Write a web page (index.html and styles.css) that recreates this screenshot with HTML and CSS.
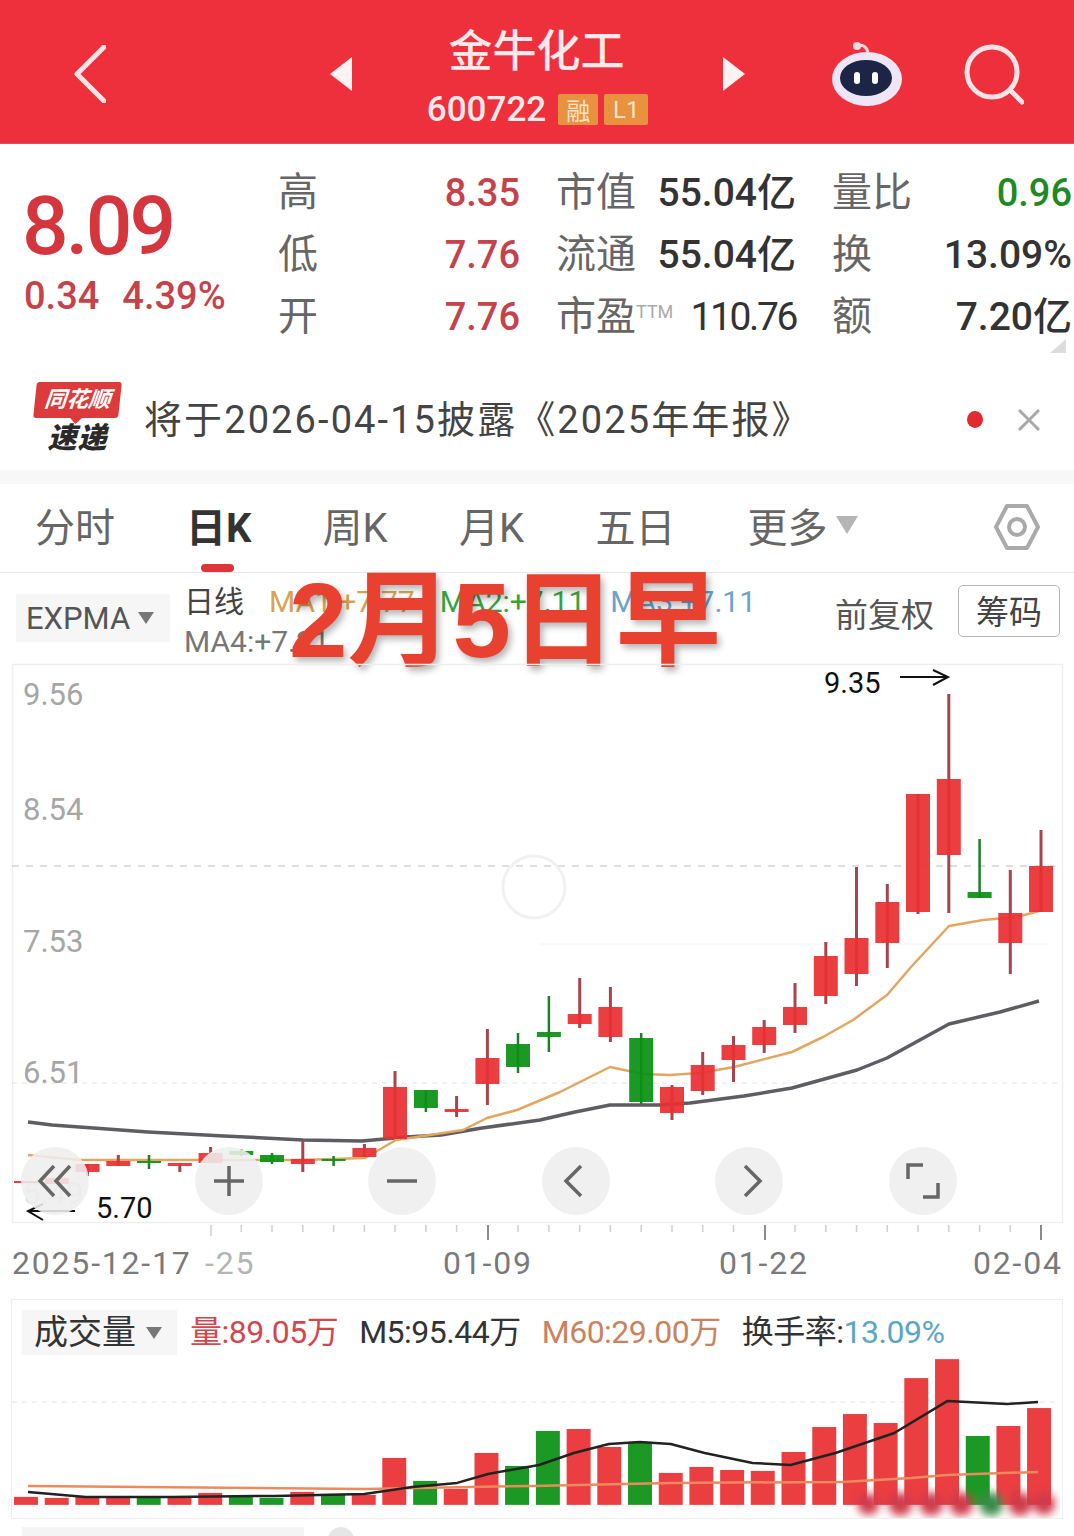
FILE: index.html
```html
<!DOCTYPE html>
<html lang="zh-CN">
<head>
<meta charset="utf-8">
<title>金牛化工 600722</title>
<link rel="stylesheet" href="styles.css">
</head>
<body>
<main class="page">
  <header class="topbar">
    <svg class="back" viewBox="0 0 32 58"><path d="M30 2 3 29l27 27"/></svg>
    <svg class="tri prev" viewBox="0 0 22 34"><path d="M22 0v34L0 17z"/></svg>
    <div class="title">
      <h1>金牛化工</h1>
      <div class="code"><span>600722</span><b class="badge rong">融</b><b class="badge">L1</b></div>
    </div>
    <svg class="tri next" viewBox="0 0 22 34"><path d="M0 0v34l22-17z"/></svg>
    <svg class="robot" viewBox="0 0 70 66">
      <path class="antenna" d="M25 6c5-2 9 0 11 6"/>
      <circle class="antenna-dot" cx="25" cy="6" r="4"/>
      <ellipse class="head" cx="35" cy="39" rx="35" ry="27"/>
      <ellipse class="face" cx="34" cy="38" rx="26" ry="18"/>
      <rect class="eye" x="22" y="32" width="6" height="12" rx="3"/>
      <rect class="eye" x="40" y="32" width="6" height="12" rx="3"/>
    </svg>
    <svg class="search" viewBox="0 0 60 62"><circle cx="28" cy="29" r="25"/><path d="m46 47 12 12"/></svg>
  </header>

  <section class="quote">
    <div class="price-block">
      <div class="price">8.09</div>
      <div class="change"><span>0.34</span><span>4.39%</span></div>
    </div>
    <div class="stats">
      <div class="stat-col first">
        <span class="lbl">高</span><span class="val red">8.35</span>
        <span class="lbl">低</span><span class="val red">7.76</span>
        <span class="lbl">开</span><span class="val red">7.76</span>
      </div>
      <div class="stat-col">
        <span class="lbl">市值</span><span class="val">55.04亿</span>
        <span class="lbl">流通</span><span class="val">55.04亿</span>
        <span class="lbl">市盈<sup>TTM</sup></span><span class="val tight">110.76</span>
      </div>
      <div class="stat-col">
        <span class="lbl">量比</span><span class="val green">0.96</span>
        <span class="lbl">换</span><span class="val">13.09%</span>
        <span class="lbl">额</span><span class="val">7.20亿</span>
      </div>
    </div>
    <i class="corner"></i>
  </section>

  <section class="news">
    <div class="logo">
      <div class="logo-top"><span>同花顺</span></div>
      <div class="logo-bottom">速递</div>
    </div>
    <p class="news-text">将于2026-04-15披露《2025年年报》</p>
    <i class="dot"></i>
    <svg class="close" viewBox="0 0 24 24"><path d="M2 2l20 20M22 2 2 22"/></svg>
  </section>

  <div class="divider"></div>

  <nav class="tabs">
    <span>分时</span>
    <span class="active">日K</span>
    <span>周K</span>
    <span>月K</span>
    <span>五日</span>
    <span class="more">更多<i class="caret caret-lg"></i></span>
    <svg class="hex" viewBox="0 0 46 46"><path d="M13 2h20l11 21-11 21H13L2 23z"/><circle cx="23" cy="23" r="8"/></svg>
  </nav>

  <section class="indicators">
    <div class="expma">EXPMA<i class="caret"></i></div>
    <div class="ma">
      <div class="ma-line"><span class="ma-name">日线</span><span class="c-orange">MA1:+7.77</span><span class="c-green">MA2:+7.11</span><span class="c-blue">MA3:+7.11</span></div>
      <div class="ma-line"><span class="c-gray">MA4:+7.21</span></div>
    </div>
    <div class="fq">前复权</div>
    <div class="chip">筹码</div>
  </section>

  <div class="stamp">2月5日早</div>

  <section class="chart">
    <svg class="chart-svg" viewBox="0 660 1074 639">
      <rect class="frame" x="12.5" y="664.5" width="1050" height="558"/>
      <path class="dash-strong" d="M12 866H1062"/>
      <path class="dash-faint" d="M12 1083H1062"/>
      <path class="dash-pale" d="M540 944H1050"/>
      <circle class="ghost" cx="534" cy="887" r="31"/>

      <text class="axis" x="23" y="705">9.56</text>
      <text class="axis" x="23" y="820">8.54</text>
      <text class="axis" x="23" y="952">7.53</text>
      <text class="axis" x="23" y="1083">6.51</text>
      <text class="axis faded" x="23" y="1204">5.49</text>

      <path class="line-grey" d="M28 1122 52 1125 148 1132 224 1136 303 1140 362 1141 406 1137 441 1135 482 1128 540 1120 575 1112 610 1105 660 1105 690 1103 744 1096 792 1088 857 1070 887 1058 949 1024 1000 1012 1039 1001"/>
      <path class="line-orange" d="M28 1155 80 1160 200 1160 300 1160 365 1158 396 1140 410 1138 463 1130 487 1118 517 1110 560 1092 610 1067 643 1074 670 1075 700 1073 734 1067 792 1052 823 1037 853 1020 887 995 911 967 949 926 983 920 1017 917 1039 911"/>

      <path class="wick wick-red" d="M87.5 1164V1176M118.3 1155V1166M179.8 1163V1172M210.6 1147V1163M302.8 1140V1172M364.4 1144V1157M395 1071V1139M456.6 1096V1117M487.4 1029V1105M579.7 978V1028M610.4 987V1042M672 1085V1120M702.7 1052V1095M733.5 1036V1082M764.2 1020V1053M795 983V1033M825.8 942V1004M856.5 867V986M887.3 884V968M918 794V914M948.8 694V913M1010.3 870V974M1041 830V912"/>
      <path class="wick wick-green" d="M149 1155V1169M241.3 1149V1156M272 1153V1164M333.6 1156V1166M425.9 1090V1112M518 1033V1073M548.9 996V1052M641.2 1033V1104M979.6 839V898"/>
      <g class="body-red">
        <rect x="14" y="1181" width="24" height="2"/>
        <rect x="44.8" y="1178" width="24" height="6"/>
        <rect x="75.5" y="1164" width="24" height="8"/>
        <rect x="106.3" y="1161" width="24" height="5"/>
        <rect x="167.8" y="1163" width="24" height="3"/>
        <rect x="198.6" y="1153" width="24" height="10"/>
        <rect x="290.8" y="1159" width="24" height="5"/>
        <rect x="352.4" y="1148" width="24" height="9"/>
        <rect x="383" y="1087" width="24" height="52"/>
        <rect x="444.6" y="1109" width="24" height="3"/>
        <rect x="475.4" y="1058" width="24" height="26"/>
        <rect x="567.7" y="1014" width="24" height="10"/>
        <rect x="598.4" y="1007" width="24" height="30"/>
        <rect x="660" y="1087" width="24" height="26"/>
        <rect x="690.7" y="1065" width="24" height="26"/>
        <rect x="721.5" y="1045" width="24" height="15"/>
        <rect x="752.2" y="1027" width="24" height="18"/>
        <rect x="783" y="1007" width="24" height="18"/>
        <rect x="813.8" y="956" width="24" height="40"/>
        <rect x="844.5" y="938" width="24" height="36"/>
        <rect x="875.3" y="902" width="24" height="41"/>
        <rect x="906" y="794" width="24" height="118"/>
        <rect x="936.8" y="779" width="24" height="76"/>
        <rect x="998.3" y="913" width="24" height="30"/>
        <rect x="1029" y="866" width="24" height="46"/>
      </g>
      <g class="body-green">
        <rect x="137" y="1161" width="24" height="2"/>
        <rect x="229.3" y="1151" width="24" height="4"/>
        <rect x="260" y="1155" width="24" height="7"/>
        <rect x="321.6" y="1159" width="24" height="2"/>
        <rect x="413.9" y="1090" width="24" height="18"/>
        <rect x="506" y="1044" width="24" height="23"/>
        <rect x="536.9" y="1032" width="24" height="5"/>
        <rect x="629.2" y="1038" width="24" height="64"/>
        <rect x="967.6" y="892" width="24" height="6"/>
      </g>

      <text class="note" x="824" y="693">9.35</text>
      <path class="arrow" d="M900 677H948M933 670 948 677 933 685"/>
      <text class="note" x="96" y="1218">5.70</text>
      <path class="arrow" d="M75 1211H28M43 1204 28 1211 43 1220"/>

      <path class="tick-minor" d="M241.3 1225V1232M272 1225V1232M302.8 1225V1232M333.6 1225V1232M364.4 1225V1232M395 1225V1232M425.9 1225V1232M456.6 1225V1232M518 1225V1232M548.9 1225V1232M579.7 1225V1232M610.4 1225V1232M641.2 1225V1232M672 1225V1232M702.7 1225V1232M733.5 1225V1232M795 1225V1232M825.8 1225V1232M856.5 1225V1232M887.3 1225V1232M918 1225V1232M948.8 1225V1232M979.6 1225V1232M1010.3 1225V1232M211 1225V1236"/>
      <path class="tick-major" d="M488 1225V1240M765 1225V1240M1041 1225V1240"/>

      <text class="date" x="12" y="1274">2025-12-17</text>
      <text class="date date-pale" x="205" y="1274">-25</text>
      <text class="date" x="443" y="1274">01-09</text>
      <text class="date" x="719" y="1274">01-22</text>
      <text class="date" x="973" y="1274">02-04</text>
    </svg>

    <div class="controls">
      <button class="ctl"><svg viewBox="0 0 36 36"><path d="M17 3 3 18l14 15M33 3 19 18l14 15"/></svg></button>
      <button class="ctl"><svg viewBox="0 0 36 36"><path d="M18 3V33M3 18H33"/></svg></button>
      <button class="ctl"><svg viewBox="0 0 36 36"><path d="M3 18H33"/></svg></button>
      <button class="ctl"><svg viewBox="0 0 36 36"><path d="M23 3 8 18l15 15"/></svg></button>
      <button class="ctl"><svg viewBox="0 0 36 36"><path d="M14 3l15 15-15 15"/></svg></button>
      <button class="ctl"><svg viewBox="0 0 36 36"><path d="M3 16V2H18M33 20V34H18"/></svg></button>
    </div>
  </section>

  <section class="volume">
    <div class="vol-head">
      <div class="vol-select">成交量<i class="caret"></i></div>
      <span class="v-red">量:89.05万</span>
      <span class="v-dark">M5:95.44万</span>
      <span class="v-orange">M60:29.00万</span>
      <span class="v-dark">换手率:<span class="v-blue">13.09%</span></span>
    </div>
    <svg class="vol-svg" viewBox="12 1356 1050 162">
      <defs><filter id="smear" x="-20%" y="-80%" width="140%" height="260%"><feGaussianBlur stdDeviation="4.5"/></filter></defs>
      <path class="dash-faint" d="M12 1402H1062"/>
      <g class="body-red">
        <rect x="14" y="1497" width="24" height="8"/>
        <rect x="44.8" y="1498" width="24" height="7"/>
        <rect x="75.5" y="1497" width="24" height="8"/>
        <rect x="106.3" y="1497" width="24" height="8"/>
        <rect x="167.8" y="1497" width="24" height="8"/>
        <rect x="198.6" y="1493" width="24" height="12"/>
        <rect x="290.8" y="1492" width="24" height="13"/>
        <rect x="352.4" y="1495" width="24" height="10"/>
        <rect x="383" y="1458" width="24" height="47"/>
        <rect x="444.6" y="1489" width="24" height="16"/>
        <rect x="475.4" y="1453" width="24" height="52"/>
        <rect x="567.7" y="1429" width="24" height="76"/>
        <rect x="598.4" y="1447" width="24" height="58"/>
        <rect x="660" y="1473" width="24" height="32"/>
        <rect x="690.7" y="1467" width="24" height="38"/>
        <rect x="721.5" y="1470" width="24" height="35"/>
        <rect x="752.2" y="1471" width="24" height="34"/>
        <rect x="783" y="1452" width="24" height="53"/>
        <rect x="813.8" y="1427" width="24" height="78"/>
        <rect x="844.5" y="1414" width="24" height="91"/>
        <rect x="875.3" y="1423" width="24" height="82"/>
        <rect x="906" y="1378" width="24" height="127"/>
        <rect x="936.8" y="1359" width="24" height="146"/>
        <rect x="998.3" y="1426" width="24" height="79"/>
        <rect x="1029" y="1408" width="24" height="97"/>
      </g>
      <g class="body-green">
        <rect x="137" y="1497" width="24" height="8"/>
        <rect x="229.3" y="1496" width="24" height="9"/>
        <rect x="260" y="1498" width="24" height="7"/>
        <rect x="321.6" y="1494" width="24" height="11"/>
        <rect x="413.9" y="1481" width="24" height="24"/>
        <rect x="506" y="1466" width="24" height="39"/>
        <rect x="536.9" y="1431" width="24" height="74"/>
        <rect x="629.2" y="1443" width="24" height="62"/>
        <rect x="967.6" y="1436" width="24" height="69"/>
      </g>
      <path class="vol-orange" d="M28 1486 365 1489 534 1486 672 1483 844 1482 913 1478 949 1475 1040 1472"/>
      <path class="vol-black" d="M28 1492 86 1497 172 1497 275 1496 365 1494 413 1487 458 1483 489 1474 540 1465 575 1453 610 1444 641 1442 672 1444 706 1453 754 1463 792 1465 837 1453 896 1433 949 1401 1009 1404 1040 1402"/>
      <g class="smear" filter="url(#smear)">
        <circle cx="870" cy="1504" r="11"/><circle cx="902" cy="1504" r="12"/><circle cx="933" cy="1504" r="12"/>
        <circle cx="963" cy="1504" r="12"/><circle class="smear-green" cx="993" cy="1504" r="12"/>
        <circle cx="1022" cy="1504" r="12"/><circle cx="1046" cy="1504" r="11"/>
      </g>
    </svg>
  </section>

  <footer class="cutoff"><i class="cut-box"></i><i class="cut-dot"></i></footer>
</main>
</body>
</html>
```

FILE: styles.css
```css
* { box-sizing: border-box; }
html, body { margin: 0; padding: 0; background: #fff; }
body { font-family: Roboto, "Noto Sans CJK SC", sans-serif; color: #333; }
i { display: block; font-style: normal; }
.page { position: relative; width: 1074px; height: 1536px; overflow: hidden; background: #fff; }

/* top bar */
.topbar { height: 144px; background: #ee303c; display: flex; align-items: center; padding: 4px 0 0 74px; border-bottom: 1px solid #d9525c; }
.back { width: 32px; height: 58px; fill: none; stroke: #fbe3e4; stroke-width: 5; stroke-linecap: round; stroke-linejoin: round; }
.tri { width: 22px; height: 34px; fill: #fff2f2; }
.prev { margin-left: 224px; }
.title { width: 371px; text-align: center; color: #fde9e9; margin-top: 11px; }
.title h1 { margin: 0; font-size: 44px; line-height: 50px; font-weight: 500; margin-left: -2px; }
.code { display: flex; justify-content: center; align-items: center; gap: 6px; height: 44px; margin-top: 11px; font-size: 35px; font-weight: 500; }
.badge { display: flex; align-items: center; justify-content: center; width: 44px; height: 31px; background: #e8923f; border-radius: 2px; font-size: 24px; font-weight: 400; color: #fbe4c8; }
.rong { width: 40px; margin-left: 6px; }
.next { margin-left: 0; }
.robot { width: 70px; height: 66px; margin-left: 87px; margin-top: -2px; }
.antenna { fill: none; stroke: #fbd9dc; stroke-width: 3; }
.antenna-dot { fill: #fbd9dc; }
.head { fill: #eee6f6; }
.face { fill: #1d2546; }
.eye { fill: #fff; }
.search { width: 60px; height: 62px; margin-left: 62px; fill: none; stroke: #fde3e4; stroke-width: 5; stroke-linecap: round; }

/* quote */
.quote { position: relative; display: flex; height: 225px; padding: 18px 0 0 22px; }
.price-block { width: 257px; color: #d23a42; }
.price { font-size: 82px; line-height: 96px; margin-top: 16px; letter-spacing: -2.8px; font-weight: 500; color: #d5353d; }
.change { display: flex; gap: 23px; font-size: 38px; line-height: 46px; margin-top: -1px; margin-left: 2px; font-weight: 500; color: #c6424a; }
.stats { display: flex; gap: 37px; }
.stat-col { width: 239px; display: grid; grid-template-columns: auto minmax(0, 1fr); grid-auto-rows: 62px; align-items: center; }
.stat-col.first { width: 241px; }
.lbl { font-size: 40px; line-height: 62px; margin-left: -1px; color: #666; white-space: nowrap; }
.lbl sup { font-size: 18px; color: #aaa; vertical-align: 12px; line-height: 0; }
.val { justify-self: end; font-size: 39px; line-height: 62px; font-weight: 500; color: #333; white-space: nowrap; }
.val.tight { letter-spacing: -2.4px; font-weight: 400; }
.val.red { font-size: 38px; color: #c6424a; }
.val.green { font-size: 38px; color: #1e8a22; }
.corner { position: absolute; right: 8px; top: 195px; width: 0; height: 0; border-left: 16px solid transparent; border-bottom: 14px solid #ddd; }

/* news */
.news { display: flex; align-items: center; height: 101px; padding: 0 33px 0 35px; }
.logo { width: 85px; margin-top: -3px; }
.logo-top { position: relative; height: 36px; background: #dd3a3c; transform: skewX(-6deg); border-radius: 3px; display: flex; align-items: center; justify-content: center; }
.logo-top::after { content: ""; position: absolute; left: 36px; bottom: -6px; border-left: 7px solid transparent; border-right: 7px solid transparent; border-top: 7px solid #dd3a3c; }
.logo-top span { color: #fff; font-size: 22px; font-weight: 700; font-style: italic; line-height: 1; }
.logo-bottom { font-size: 29px; line-height: 34px; font-weight: 900; font-style: italic; color: #2a2a2a; text-align: center; margin-top: 3px; letter-spacing: 1px; }
.news-text { margin: 0 0 0 24px; font-size: 38px; line-height: 50px; letter-spacing: 2.1px; color: #444; white-space: nowrap; }
.dot { width: 16px; height: 17px; border-radius: 50%; background: #e02b2f; margin-left: auto; }
.close { width: 24px; height: 24px; margin-left: 34px; fill: none; stroke: #a8a8a8; stroke-width: 3; }

.divider { height: 14px; background: #f7f7f7; }

/* tabs */
.tabs { position: relative; display: grid; grid-template-columns: 151px repeat(3, 136.5px) 152px auto; align-items: center; height: 89px; padding: 0 0 7px 35px; font-size: 40px; color: #666; border-bottom: 1px solid #e8e8e8; }
.tabs span { white-space: nowrap; }
.tabs .active { font-weight: 700; color: #333; }
.tabs .active::after { content: ""; position: absolute; left: 201px; top: 80px; width: 33px; height: 8px; border-radius: 4px; background: #e03538; }
.more { display: flex; align-items: center; gap: 8px; }
.hex { position: absolute; right: 34px; top: 20px; width: 46px; height: 46px; fill: none; stroke: #aaa; stroke-width: 4; stroke-linejoin: round; }
.caret { width: 0; height: 0; border-left: 8px solid transparent; border-right: 8px solid transparent; border-top: 12px solid #777; }
.caret-lg { border-left-width: 11px; border-right-width: 11px; border-top: 18px solid #b5b5b5; }

/* indicator row */
.indicators { display: flex; align-items: flex-start; height: 87px; padding: 0 14px 0 16px; }
.expma { display: flex; align-items: center; gap: 8px; width: 154px; height: 48px; margin-top: 21px; padding-left: 10px; background: #f6f6f6; font-size: 31px; color: #555; }
.ma { margin: 9px 0 0 14px; font-size: 30px; line-height: 40px; }
.ma-line { display: flex; gap: 25px; white-space: nowrap; }
.ma-name { color: #444; margin-right: 0; }
.c-orange { color: #d9a351; }
.c-green { color: #35a53b; }
.c-blue { color: #6aa3cd; }
.c-gray { color: #777; }
.fq { margin-left: auto; margin-top: 20px; font-size: 33px; line-height: 46px; color: #555; }
.chip { width: 102px; height: 52px; margin: 12px 0 0 24px; border: 1px solid #b5b5b5; border-radius: 5px; font-size: 33px; line-height: 54px; text-align: center; color: #444; }

.stamp { position: absolute; left: 289px; top: 556px; font-family: "Liberation Sans", "Noto Sans CJK SC", sans-serif; font-size: 105px; line-height: 130px; font-weight: 700; color: #e8412f; white-space: nowrap; text-shadow: 3px 4px 7px rgba(0,0,0,.3); }

/* chart */
.chart { position: relative; height: 639px; }
.chart-svg { display: block; width: 1074px; height: 639px; }
.chart-svg text { font-family: Roboto, sans-serif; }
.frame { fill: none; stroke: #eee; stroke-width: 1.5; }
.dash-strong { stroke: #bdbdbd; stroke-width: 1; stroke-dasharray: 7 7; fill: none; }
.dash-faint { stroke: #e2e2e2; stroke-width: 1; stroke-dasharray: 5 5; fill: none; }
.dash-pale { stroke: #f4f4f4; stroke-width: 1; fill: none; }
.ghost { fill: none; stroke: #f1f1f1; stroke-width: 3; }
.axis { font-size: 31px; fill: #a6a6a6; }
.axis.faded { fill: #d8d8d8; }
.line-grey { fill: none; stroke: #5d5d63; stroke-width: 3.5; stroke-linejoin: round; }
.line-orange { fill: none; stroke: #e2a660; stroke-width: 2.5; stroke-linejoin: round; }
.wick { fill: none; stroke-width: 3; }
.wick-red { stroke: #a8444e; }
.wick-green { stroke: #1c7f2a; stroke-width: 2.5; }
.body-red { fill: #e92f33; fill-opacity: .93; }
.body-green { fill: #0a9113; fill-opacity: .93; }
.note { font-size: 29px; fill: #111; }
.arrow { fill: none; stroke: #111; stroke-width: 2; }
.tick-minor { stroke: #cfcfcf; stroke-width: 1.5; }
.tick-major { stroke: #8a8a8a; stroke-width: 2; }
.date { font-size: 32px; fill: #7a7a7a; letter-spacing: 1.8px; }
.date-pale { fill: #b5b5b5; }

.controls { position: absolute; left: 21px; top: 487px; display: flex; gap: 105.6px; }
.ctl { width: 68px; height: 68px; padding: 0; border: 0; border-radius: 50%; background: rgba(238,238,238,.88); display: flex; align-items: center; justify-content: center; }
.ctl svg { width: 36px; height: 36px; fill: none; stroke: #666; stroke-width: 3.5; }

/* volume */
.volume { margin: 0 11px; height: 220px; border: 1px solid #eee; }
.vol-head { display: flex; align-items: flex-start; height: 56px; padding-left: 10px; font-size: 32px; line-height: 64px; letter-spacing: -.5px; white-space: nowrap; }
.vol-select { display: flex; align-items: center; gap: 10px; width: 155px; height: 45px; margin: 10px 13px 0 0; padding-left: 12px; background: #f6f6f6; font-size: 34px; line-height: 45px; letter-spacing: 0; color: #333; }
.vol-head > span { margin-right: 21px; }
.v-red { color: #d2474f; }
.v-dark { color: #333; }
.v-orange { color: #c9835e; }
.v-blue { color: #5aa6c9; }
.vol-svg { display: block; width: 1048px; height: 162px; }
.vol-orange { fill: none; stroke: #ec8a5e; stroke-width: 2.5; }
.vol-black { fill: none; stroke: #222; stroke-width: 2.5; stroke-linejoin: round; }
.smear { fill: #cf3a4c; }
.smear-green { fill: #3a8a4a; }

.cutoff { display: flex; align-items: flex-start; gap: 14px; margin-top: 8px; padding-left: 22px; }
.cut-box { width: 282px; height: 10px; background: #f4f4f4; }
.cut-dot { width: 26px; height: 26px; border-radius: 50%; background: #e6e6e6; margin-left: 10px; }
```
